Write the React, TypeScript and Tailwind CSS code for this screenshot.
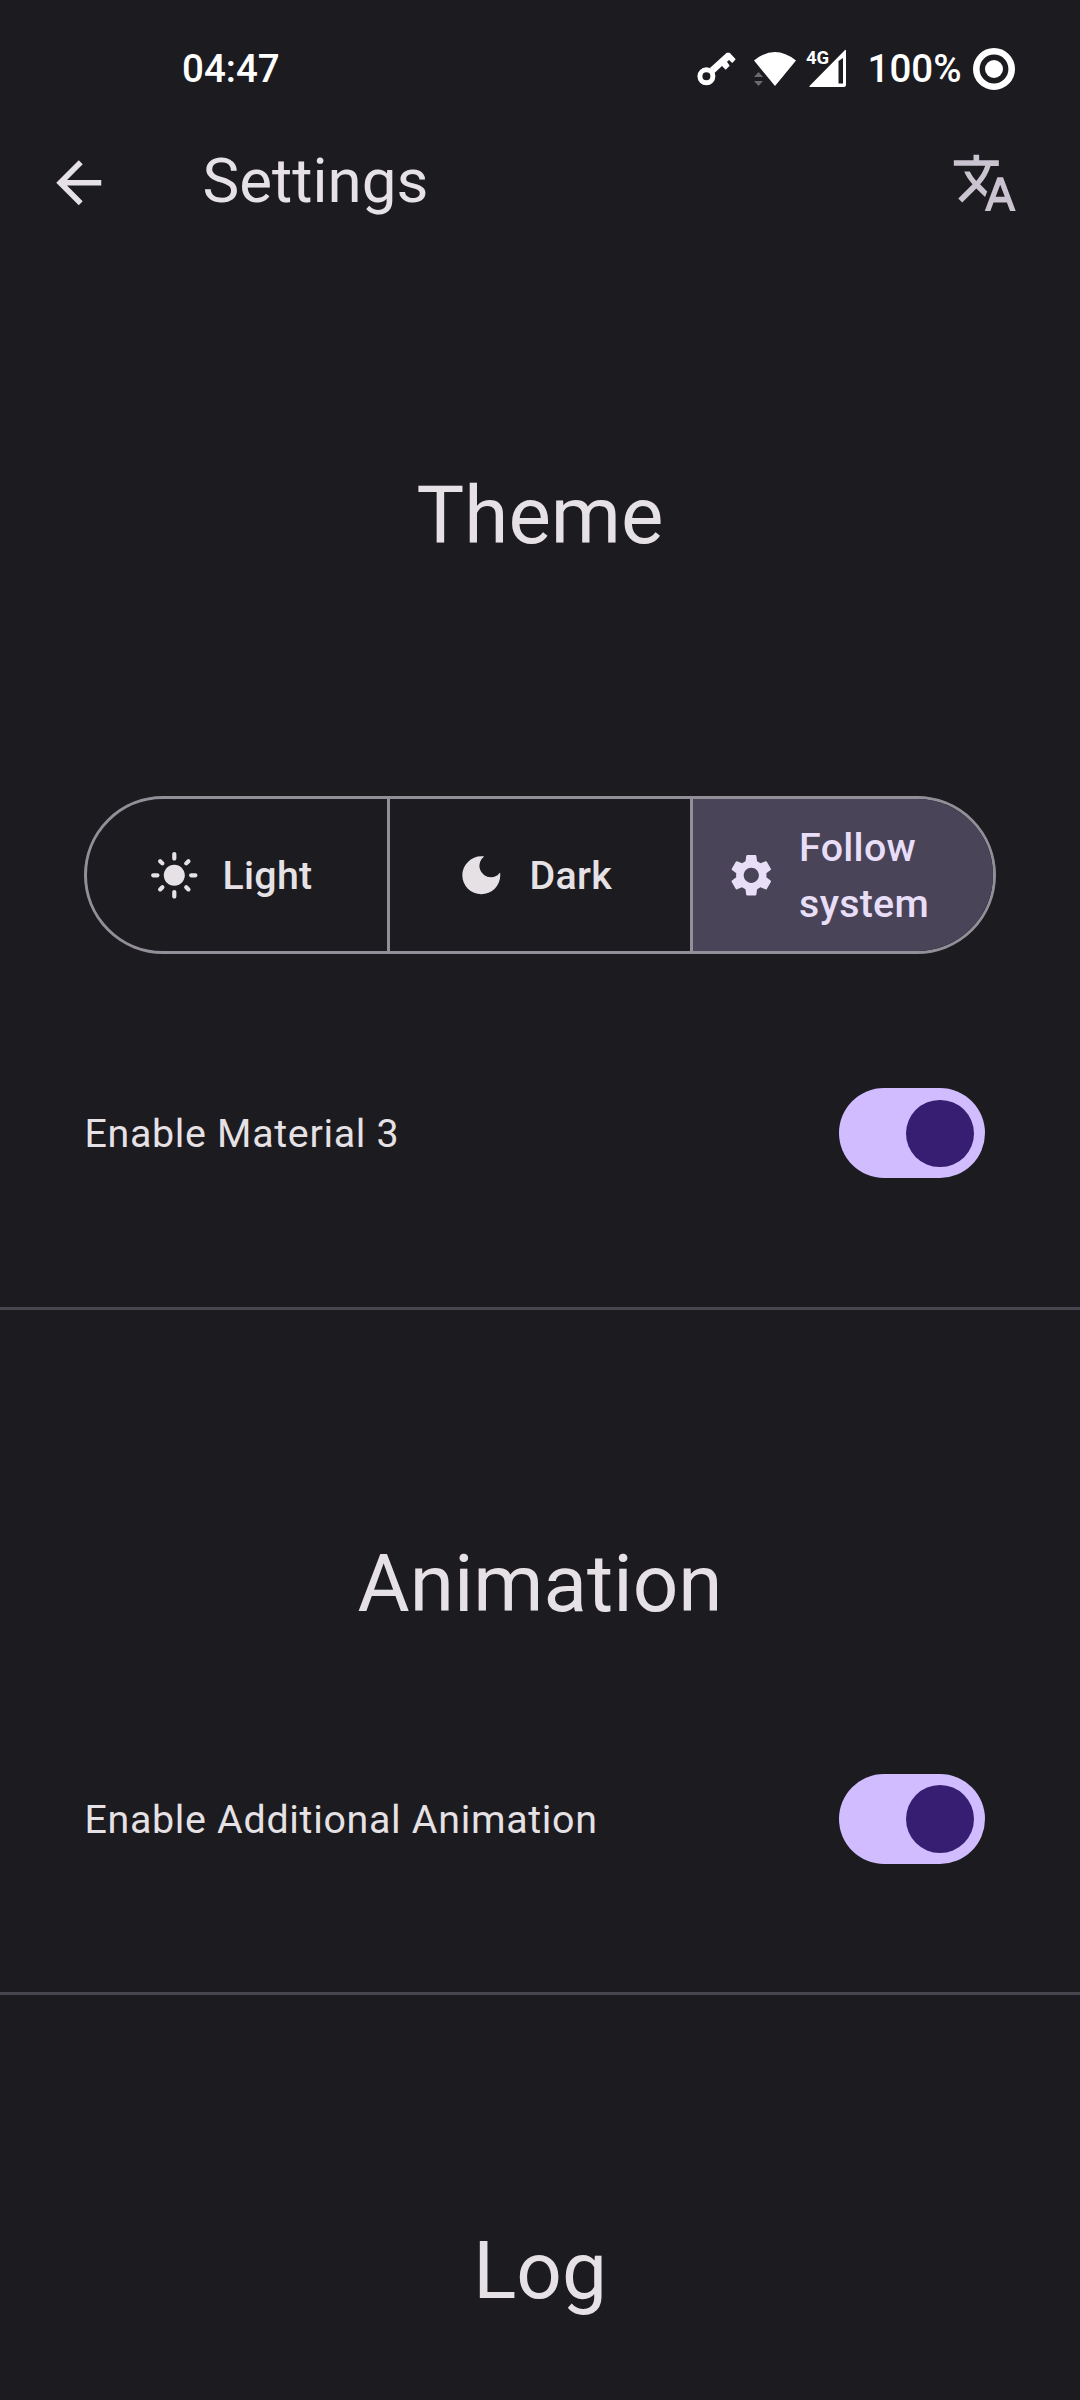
import { MdArrowBack, MdTranslate, MdLightMode, MdDarkMode, MdSettings } from "react-icons/md";

function Switch() {
  return (
    <div className="flex h-[90px] w-[146.25px] items-center justify-end rounded-full bg-[#d0bcff] pr-[11.25px]">
      <div className="size-[67.5px] rounded-full bg-[#381e72]" />
    </div>
  );
}

function Row({ label }: { label: string }) {
  return (
    <div className="flex h-[90px] items-center justify-between pr-[95.2px] pl-[84.4px]">
      <span className="pt-[2px] text-[39.375px] leading-[56px] tracking-[0.7px]">{label}</span>
      <Switch />
    </div>
  );
}

function StatusBar() {
  return (
    <div className="flex h-[138px] items-center pl-[182px] text-[38.5px] font-medium leading-none text-white">
      <span className="w-[514px] pt-px">04:47</span>
      <svg className="h-[80px] w-[171.5px]" viewBox="0 -1 171.5 80" fill="currentColor">
        <circle cx="10.4" cy="46.3" r="6.5" fill="none" stroke="currentColor" strokeWidth="5" />
        <path d="M13.9 38.1L30.700 22.700H33.700L39.700 29.300L36.300 33L33 30L31 31.700L33.700 35.700L29.700 39.700L26 36L18.500 43Z" />
        <path d="M58 30.5Q79 13.5 100 30.5L79 56Z" />
        <path d="M58 47h9l-4.5-5zM58 51h9l-4.5 5z" fill="#6b6a6d" />
        <text x="110" y="34.3" className="text-[18.5px] font-bold">4G</text>
        <path fillRule="evenodd" d="M148.5 20.5Q150 19 150 21V55q0 2-2 2H114.500q-2 0-.5-1.500ZM142.500 31V53.500H147V28Z" />
      </svg>
      <span className="w-[105.5px] pt-px">100%</span>
      <svg className="size-[42px]" viewBox="0 0 42 42" fill="currentColor">
        <circle cx="21" cy="21" r="17.7" fill="none" stroke="currentColor" strokeWidth="6.600" />
        <circle cx="21" cy="21" r="9" />
      </svg>
    </div>
  );
}

export default function App() {
  return (
    <main className="h-[2400px] w-[1080px] overflow-hidden bg-[#1c1b1f] font-[Roboto,sans-serif] text-[#e6e1e5]">
      <StatusBar />
      <header className="flex h-[90px] items-center pr-[62px] pl-[45px]">
        <MdArrowBack className="size-[67.5px]" />
        <h1 className="ml-[90px] grow pb-[4px] text-[61.875px] leading-[79px]">Settings</h1>
        <MdTranslate className="size-[67.5px] text-[#cac4d0]" />
      </header>
      <section className="flex h-[1079px] flex-col">
        <h2 className="mt-[238px] text-center text-[80px] leading-[100px]">Theme</h2>
        <div className="mx-[84px] mt-[230px] flex h-[158px] overflow-hidden rounded-full border-[3px] border-[#938f99] text-[39.375px] font-medium leading-[56px] tracking-[0.28px]">
          <div className="flex w-[303px] items-center border-r-[3px] border-[#938f99] pl-[62px]">
            <MdLightMode className="size-[50.6px]" />
            <span className="ml-[22.900px] pt-[2px]">Light</span>
          </div>
          <div className="flex w-[303px] items-center border-r-[3px] border-[#938f99] pl-[66px]">
            <MdDarkMode className="size-[50.6px]" />
            <span className="ml-[23px] pt-[2px]">Dark</span>
          </div>
          <div className="flex grow items-center bg-[#4a4458] pl-[33px] text-[#e8def8]">
            <MdSettings className="size-[50.6px]" />
            <span className="ml-[22.500px] pt-[2px]">Follow<br />system</span>
          </div>
        </div>
        <div className="mt-[134.4px]">
          <Row label="Enable Material 3" />
        </div>
      </section>
      <hr className="border-t-[3px] border-[#49454f]" />
      <section className="h-[682px] pt-[224px]">
        <h2 className="mb-[140px] text-center text-[80px] leading-[100px]">Animation</h2>
        <Row label="Enable Additional Animation" />
      </section>
      <hr className="border-t-[3px] border-[#49454f]" />
      <section>
        <h2 className="pt-[226px] text-center text-[80px] leading-[100px]">Log</h2>
      </section>
    </main>
  );
}
